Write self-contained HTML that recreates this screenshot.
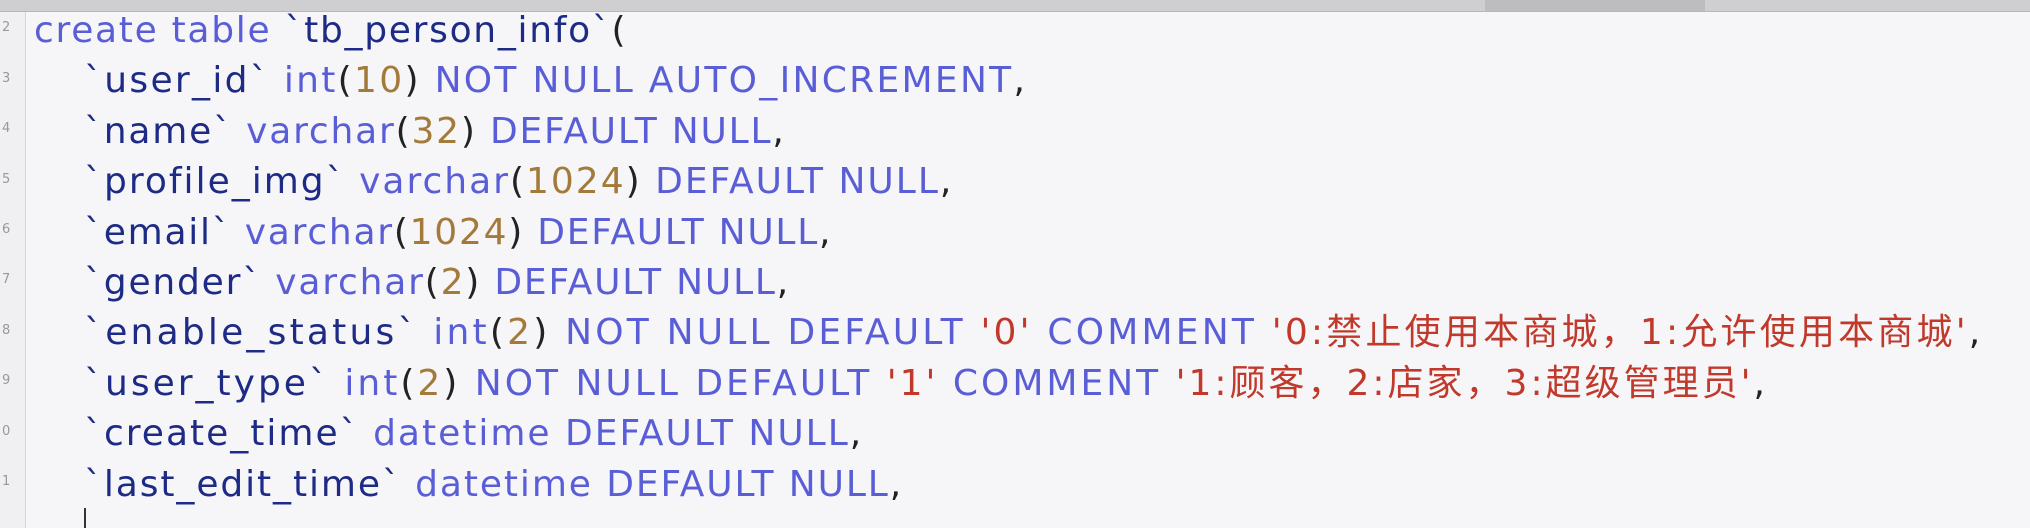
<!DOCTYPE html>
<html><head><meta charset="utf-8"><style>
html,body{margin:0;padding:0;width:2030px;height:528px;overflow:hidden;background:#f6f6f8;}
.top{position:absolute;left:0;top:0;width:2030px;height:11px;background:#cfcfd2;border-bottom:1px solid #b8b8bc;}
.top .a{position:absolute;left:1485px;top:0;width:220px;height:11px;background:#bdbdc0;}
.gut{position:absolute;left:0;top:12px;width:25px;height:516px;background:#f0f0f2;border-right:1px solid #d6d6da;}
.ln{position:absolute;left:2px;font:13px "DejaVu Sans",sans-serif;color:#999;}
.code{position:absolute;left:34px;top:6px;font-family:"DejaVu Sans","Noto Sans CJK SC",sans-serif;font-size:36px;letter-spacing:2px;line-height:50.4px;white-space:pre;color:#1e2b86;}
.i{padding-left:50px;}
.k{color:#5a5ed6;}
.n{color:#a47a3a;}
.p{color:#222;}
.s{color:#c0392b;}
.cur{position:absolute;left:84px;top:508px;width:2px;height:20px;background:#333;}
</style></head><body>
<div class="top"><div class="a"></div></div>
<div class="gut"></div>
<div class="ln" style="top:20px">2</div>
<div class="ln" style="top:71px">3</div>
<div class="ln" style="top:121px">4</div>
<div class="ln" style="top:172px">5</div>
<div class="ln" style="top:222px">6</div>
<div class="ln" style="top:272px">7</div>
<div class="ln" style="top:323px">8</div>
<div class="ln" style="top:373px">9</div>
<div class="ln" style="top:424px">0</div>
<div class="ln" style="top:474px">1</div>
<div class="code"><div style="letter-spacing:1.7px"><span class="k">create table </span>`tb_person_info`<span class="p">(</span></div><div class="i" style="letter-spacing:2.3px">`user_id` <span class="k">int</span><span class="p">(</span><span class="n">10</span><span class="p">)</span> <span class="k">NOT NULL AUTO_INCREMENT</span><span class="p">,</span></div><div class="i" style="letter-spacing:1.8px">`name` <span class="k">varchar</span><span class="p">(</span><span class="n">32</span><span class="p">)</span> <span class="k">DEFAULT NULL</span><span class="p">,</span></div><div class="i">`profile_img` <span class="k">varchar</span><span class="p">(</span><span class="n">1024</span><span class="p">)</span> <span class="k">DEFAULT NULL</span><span class="p">,</span></div><div class="i" style="letter-spacing:1.75px">`email` <span class="k">varchar</span><span class="p">(</span><span class="n">1024</span><span class="p">)</span> <span class="k">DEFAULT NULL</span><span class="p">,</span></div><div class="i" style="letter-spacing:1.8px">`gender` <span class="k">varchar</span><span class="p">(</span><span class="n">2</span><span class="p">)</span> <span class="k">DEFAULT NULL</span><span class="p">,</span></div><div class="i" style="letter-spacing:3.2px">`enable_status` <span class="k">int</span><span class="p">(</span><span class="n">2</span><span class="p">)</span> <span class="k">NOT NULL DEFAULT</span> <span class="s">'0'</span> <span class="k">COMMENT</span> <span class="s">'0:禁止使用本商城，1:允许使用本商城'</span><span class="p">,</span></div><div class="i" style="letter-spacing:3px">`user_type` <span class="k">int</span><span class="p">(</span><span class="n">2</span><span class="p">)</span> <span class="k">NOT NULL DEFAULT</span> <span class="s">'1'</span> <span class="k">COMMENT</span> <span class="s">'1:顾客，2:店家，3:超级管理员'</span><span class="p">,</span></div><div class="i">`create_time` <span class="k">datetime DEFAULT NULL</span><span class="p">,</span></div><div class="i" style="letter-spacing:1.9px">`last_edit_time` <span class="k">datetime DEFAULT NULL</span><span class="p">,</span></div></div>
<div class="cur"></div>
</body></html>
